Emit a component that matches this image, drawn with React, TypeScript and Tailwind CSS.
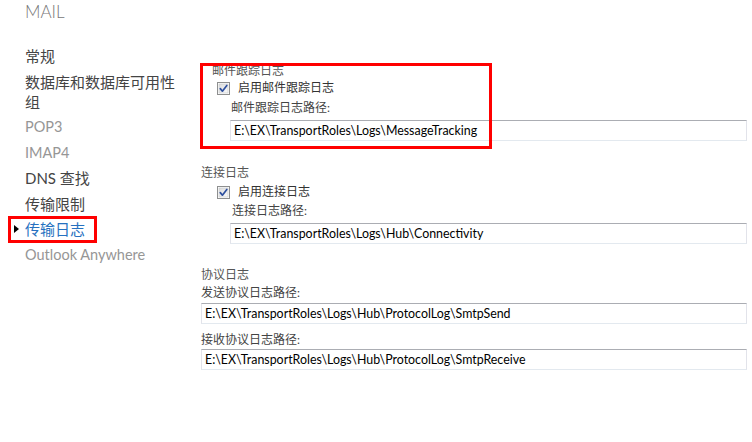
import React from 'react'

const font = "font-['Segoe_UI','Lato','Noto_Sans_CJK_SC',sans-serif]"

const navItems = [
  { label: '常规', tone: 'dark', latin: false },
  { label: '数据库和数据库可用性组', tone: 'dark', latin: false },
  { label: 'POP3', tone: 'muted', latin: true },
  { label: 'IMAP4', tone: 'muted', latin: true },
  { label: 'DNS 查找', tone: 'dark', latin: false },
  { label: '传输限制', tone: 'dark', latin: false },
  { label: '传输日志', tone: 'active', latin: false },
  { label: 'Outlook Anywhere', tone: 'muted', latin: true },
]

const CheckBox = () => (
  <svg width="13" height="13" viewBox="0 0 13 13" className="shrink-0">
    <defs>
      <linearGradient id="cbg" x1="0" y1="0" x2="1" y2="1">
        <stop offset="0" stopColor="#dcdcdc" />
        <stop offset="1" stopColor="#fbfbfb" />
      </linearGradient>
    </defs>
    <rect x="0.5" y="0.5" width="12" height="12" fill="#fff" stroke="#8e8f8f" />
    <rect x="2" y="2" width="9" height="9" fill="url(#cbg)" stroke="#c4c6c8" strokeWidth="0.6" />
    <path d="M3.3 6.6 L5.4 9.2 L9.8 3.4" fill="none" stroke="#2d4f9e" strokeWidth="1.7" strokeLinecap="round" strokeLinejoin="round" />
  </svg>
)

const PathBox = ({ value, w }: { value: string; w: string }) => (
  <div className={`${w} h-[21px] border border-t-[#abadb3] border-x-[#e2e3ea] border-b-[#e3e9ef] bg-white pl-[3px] text-[12.4px] leading-[19px] text-black`}>
    {value}
  </div>
)

const CheckRow = ({ label }: { label: string }) => (
  <div className="flex h-[18px] items-center gap-[8px] pl-[17px] text-[12px] text-[#333]">
    <CheckBox />
    <span>{label}</span>
  </div>
)

export default function App() {
  return (
    <div className={`${font} flex h-[442px] w-[752px] overflow-hidden bg-white`}>
      <div className="w-[200px] shrink-0 pl-[25px]">
        <div className="text-[17px] font-light leading-[24px] text-[#777]">MAIL</div>
        <ul className="mt-[22px] flex w-[160px] flex-col gap-[5.5px] text-[15px] leading-[20px]">
          {navItems.map((item) => (
            <li
              key={item.label}
              className={
                (item.latin ? 'text-[14.5px] ' : '') +
                (item.tone === 'active'
                  ? 'relative text-[#2671c0]'
                  : item.tone === 'muted'
                  ? 'text-[#969696]'
                  : 'text-[#444]')
              }
            >
              {item.tone === 'active' && (
                <>
                  <span className="absolute left-[-11px] top-[6px] h-0 w-0 border-y-[4px] border-l-[5px] border-y-transparent border-l-black" />
                  <span className="absolute left-[-17px] top-[-3px] h-[27px] w-[89px] border-[3px] border-[#f00]" />
                </>
              )}
              {item.label}
            </li>
          ))}
        </ul>
      </div>

      <div className="flex-1 pt-[63px] text-[12px] text-[#444]">
        {/* 邮件跟踪日志 */}
        <section className="relative">
          <div className="pl-[12px] leading-[16px] text-[#555]">邮件跟踪日志</div>
          <CheckRow label="启用邮件跟踪日志" />
          <div className="mt-[2px] pl-[31px] leading-[18px]">邮件跟踪日志路径:</div>
          <div className="mt-[3px] pl-[30px]">
            <PathBox w="w-[517px]" value="E:\EX\TransportRoles\Logs\MessageTracking" />
          </div>
          <span className="absolute left-0 top-0 h-[86px] w-[292px] border-[3px] border-[#f00]" />
        </section>

        {/* 连接日志 */}
        <section className="mt-[24px]">
          <div className="pl-[1px] leading-[16px] text-[#555]">连接日志</div>
          <div className="mt-[2px]">
            <CheckRow label="启用连接日志" />
          </div>
          <div className="mt-[1px] pl-[32px] leading-[18px]">连接日志路径:</div>
          <div className="mt-[3px] pl-[30px]">
            <PathBox w="w-[517px]" value="E:\EX\TransportRoles\Logs\Hub\Connectivity" />
          </div>
        </section>

        {/* 协议日志 */}
        <section className="mt-[23px] pl-[1px]">
          <div className="leading-[16px] text-[#555]">协议日志</div>
          <div className="mt-[1px] leading-[18px]">发送协议日志路径:</div>
          <div className="mt-[1px]">
            <PathBox w="w-[546px]" value="E:\EX\TransportRoles\Logs\Hub\ProtocolLog\SmtpSend" />
          </div>
          <div className="mt-[7px] leading-[18px]">接收协议日志路径:</div>
          <PathBox w="w-[546px]" value="E:\EX\TransportRoles\Logs\Hub\ProtocolLog\SmtpReceive" />
        </section>
      </div>
    </div>
  )
}
